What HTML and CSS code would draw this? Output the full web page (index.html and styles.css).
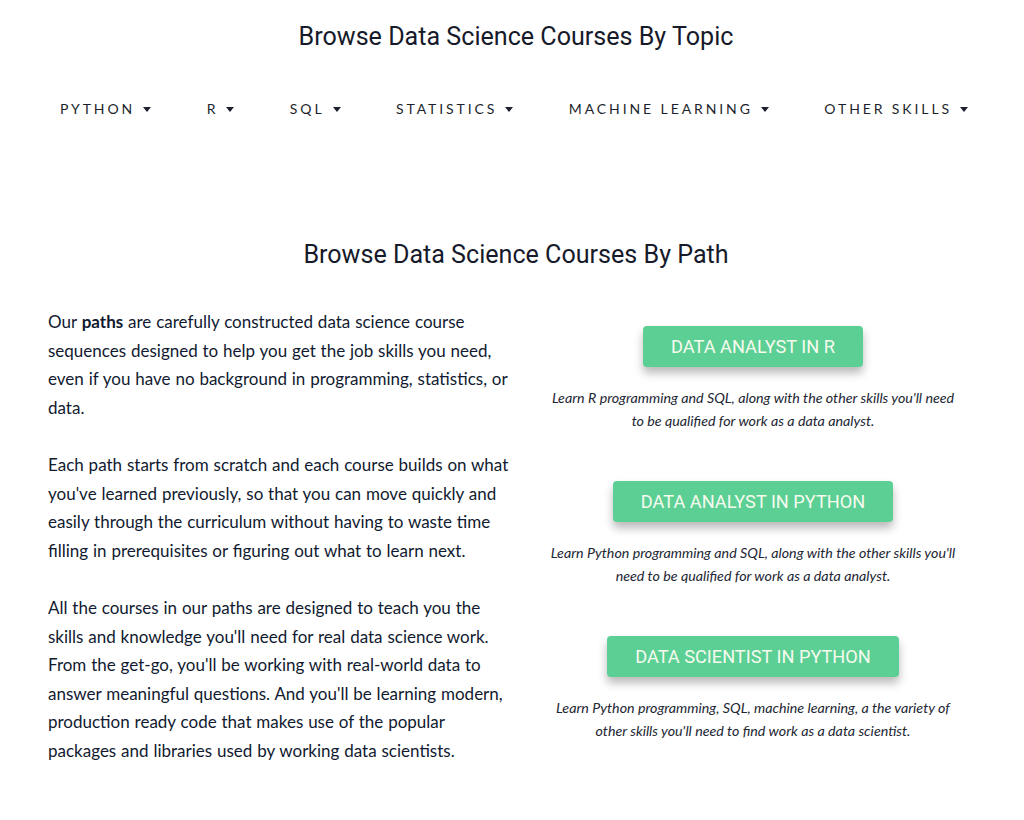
FILE: index.html
```html
<!DOCTYPE html>
<html lang="en">
<head>
<meta charset="utf-8">
<title>Browse Data Science Courses</title>
<link rel="stylesheet" href="styles.css">
</head>
<body>
<section class="topics">
  <h2 class="section-title">Browse Data Science Courses By Topic</h2>
  <nav class="topic-nav">
    <a class="topic" href="#">PYTHON<span class="caret"></span></a>
    <a class="topic" href="#">R<span class="caret"></span></a>
    <a class="topic" href="#">SQL<span class="caret"></span></a>
    <a class="topic" href="#">STATISTICS<span class="caret"></span></a>
    <a class="topic" href="#">MACHINE LEARNING<span class="caret"></span></a>
    <a class="topic" href="#">OTHER SKILLS<span class="caret"></span></a>
  </nav>
</section>
<section class="paths">
  <h2 class="section-title">Browse Data Science Courses By Path</h2>
  <div class="row">
    <div class="col col-text">
      <p>Our <strong class="em">paths</strong> are carefully constructed data science course sequences designed to help you get the job skills you need, even if you have no background in programming, statistics, or data.</p>
      <p>Each path starts from scratch and each course builds on what you've learned previously, so that you can move quickly and easily through the curriculum without having to waste time filling in prerequisites or figuring out what to learn next.</p>
      <p>All the courses in our paths are designed to teach you the skills and knowledge you'll need for real data science work. From the get-go, you'll be working with real-world data to answer meaningful questions. And you'll be learning modern, production ready code that makes use of the popular packages and libraries used by working data scientists.</p>
    </div>
    <div class="col col-paths">
      <div class="path">
        <a class="path-btn" href="#">DATA ANALYST IN R</a>
        <p class="path-desc">Learn R programming and SQL, along with the other skills you'll need to be qualified for work as a data analyst.</p>
      </div>
      <div class="path">
        <a class="path-btn" href="#">DATA ANALYST IN PYTHON</a>
        <p class="path-desc">Learn Python programming and SQL, along with the other skills you'll need to be qualified for work as a data analyst.</p>
      </div>
      <div class="path">
        <a class="path-btn" href="#">DATA SCIENTIST IN PYTHON</a>
        <p class="path-desc">Learn Python programming, SQL, machine learning, a the variety of other skills you'll need to find work as a data scientist.</p>
      </div>
    </div>
  </div>
</section>
</body>
</html>
```
FILE: styles.css
```css
html, body {
  margin: 0;
  padding: 0;
  background: #ffffff;
}
*, *::before, *::after {
  box-sizing: border-box;
}
body {
  font-family: "Lato", "Noto Sans", sans-serif;
  color: #111a30;
}
.section-title {
  font-family: "Roboto", "Liberation Sans", sans-serif;
  font-weight: 400;
  font-size: 25.1px;
  line-height: 30px;
  text-align: center;
  color: #161a2a;
  margin: 0;
  padding-left: 8px;
}
.topics {
  padding-top: 22px;
}
.topic-nav {
  display: flex;
  justify-content: center;
  gap: 55.5px;
  margin-top: 47px;
  padding-left: 4px;
}
.topic {
  display: flex;
  align-items: center;
  font-family: "Lato", sans-serif;
  font-size: 14px;
  letter-spacing: 2.9px;
  color: #1c1f2c;
  text-decoration: none;
  line-height: 20px;
}
.caret {
  display: inline-block;
  width: 0;
  height: 0;
  margin-left: 8px;
  border-left: 4.5px solid transparent;
  border-right: 4.5px solid transparent;
  border-top: 5px solid #1c1f2c;
}
.paths {
  padding-top: 121px;
}
.row {
  display: flex;
  width: 940px;
  margin: 38px auto 0;
}
.col {
  flex: 0 0 50%;
  padding: 0 15px;
}
.col-text {
  padding-left: 6px;
  padding-right: 1px;
}
.col-text p {
  font-size: 17px;
  line-height: 28.6px;
  word-spacing: 0.5px;
  margin: 0 0 28.6px;
  color: #111a30;
}
.em {
  font-weight: 700;
}
.col-paths {
  display: flex;
  flex-direction: column;
  align-items: center;
  padding-top: 18px;
  padding-left: 27px;
}
.path {
  display: flex;
  flex-direction: column;
  align-items: center;
  height: 155px;
}
.path-btn {
  display: block;
  background: #5ccf95;
  color: #f6fbee;
  font-family: "Roboto", sans-serif;
  font-size: 18.2px;
  line-height: 41px;
  padding: 0 28px;
  border-radius: 4px;
  text-decoration: none;
  box-shadow: 0 6px 10px rgba(0, 0, 0, 0.28);
}
.path-desc {
  font-style: italic;
  font-size: 14.25px;
  line-height: 23px;
  text-align: center;
  color: #222633;
  margin: 19px 0 0;
  width: 408px;
}
```
